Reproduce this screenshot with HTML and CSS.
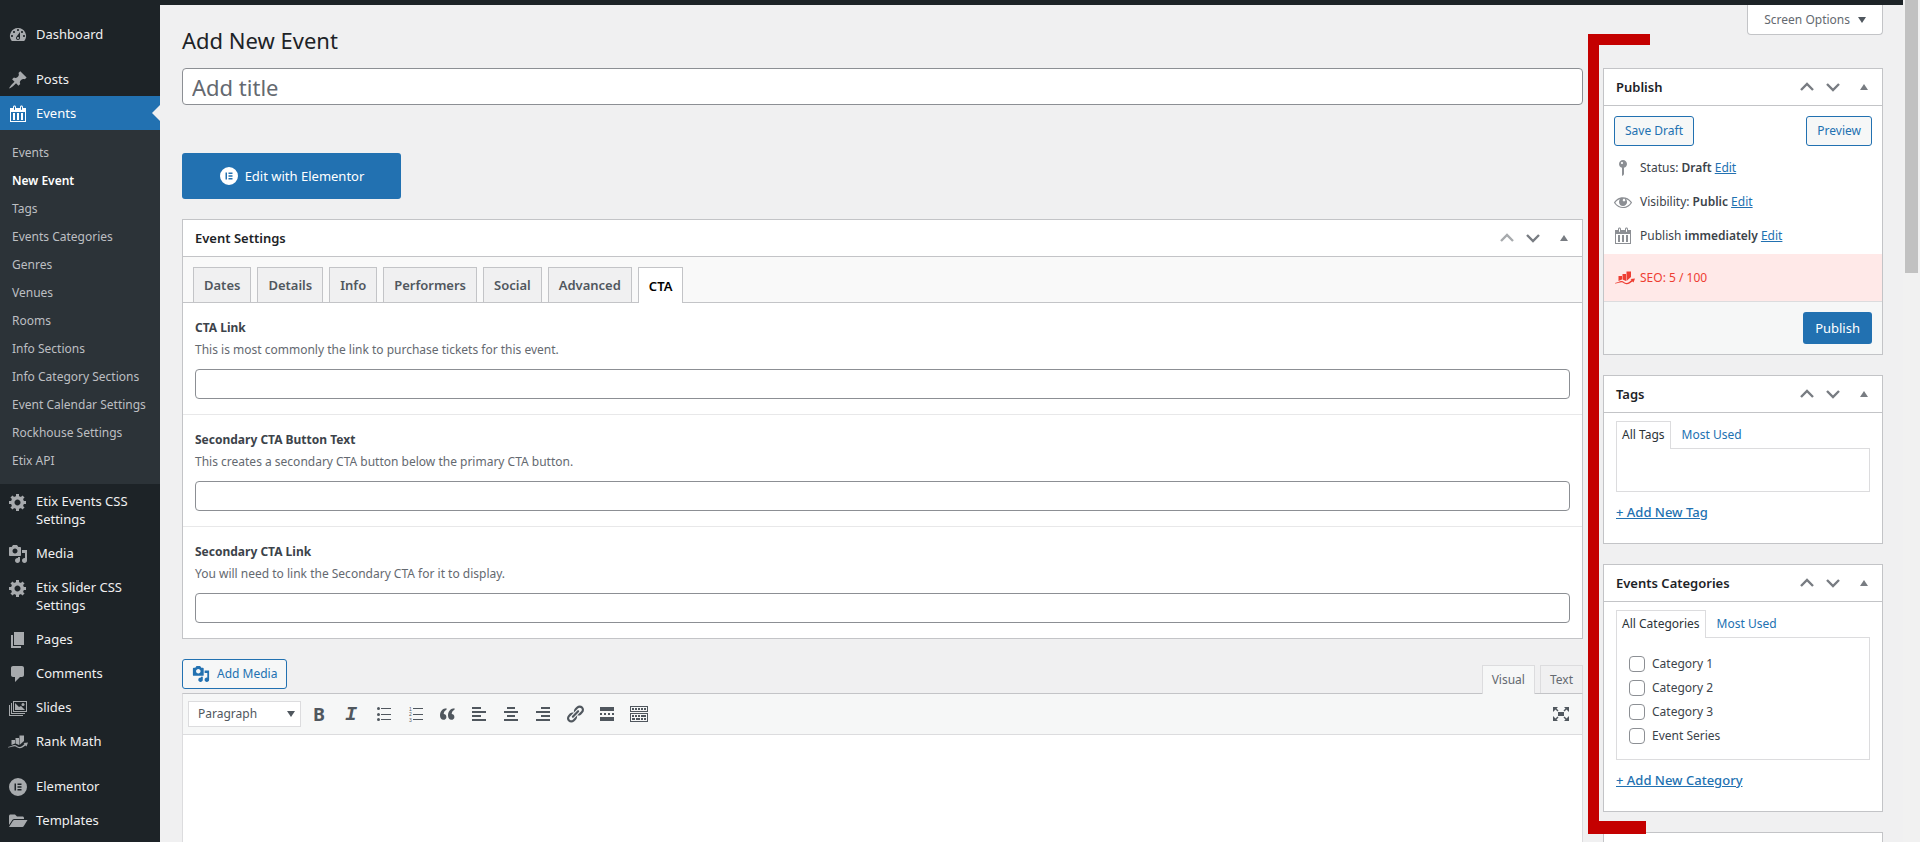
FILE: index.html
```html
<!DOCTYPE html>
<html lang="en">
<head>
  <meta charset="utf-8">
  <title>Add New Event</title>
  <link rel="stylesheet" href="styles.css">
</head>
<body>
  <!-- icon sprite -->
  <svg class="sprite">
    <symbol id="i-dashboard" viewBox="0 0 20 20"><path d="M3.76 16h12.48A7.998 7.998 0 0 0 10 3a7.998 7.998 0 0 0-6.24 13zM10 4c.55 0 1 .45 1 1s-.45 1-1 1-1-.45-1-1 .45-1 1-1zM6 6c.55 0 1 .45 1 1s-.45 1-1 1-1-.45-1-1 .45-1 1-1zm8 0c.55 0 1 .45 1 1s-.45 1-1 1-1-.45-1-1 .45-1 1-1zm-5.37 5.55L12 7v6c0 1.1-.9 2-2 2s-2-.9-2-2c0-.57.24-1.08.63-1.45zM4 10c.55 0 1 .45 1 1s-.45 1-1 1-1-.45-1-1 .45-1 1-1zm12 0c.55 0 1 .45 1 1s-.45 1-1 1-1-.45-1-1 .45-1 1-1zm-5 3c0-.55-.45-1-1-1s-1 .45-1 1 .45 1 1 1 1-.45 1-1z"/></symbol>
    <symbol id="i-post" viewBox="0 0 20 20"><path d="M10.44 3.02l1.82-1.82 6.36 6.35-1.83 1.82c-1.05-.68-2.48-.57-3.41.36l-.75.75c-.92.93-1.04 2.35-.35 3.41l-1.83 1.82-2.41-2.41-2.8 2.79c-.42.42-3.38 2.71-3.8 2.29s1.86-3.39 2.28-3.81l2.79-2.79L4.1 9.36l1.83-1.82c1.05.69 2.48.57 3.4-.36l.75-.75c.93-.92 1.05-2.35.36-3.41z"/></symbol>
    <symbol id="i-calendar" viewBox="0 0 20 20"><path d="M15 4h3v14H2V4h3V3c0-.83.67-1.5 1.5-1.5S8 2.17 8 3v1h4V3c0-.83.67-1.5 1.5-1.5S15 2.17 15 3v1zM6 3v2.5c0 .28.22.5.5.5s.5-.22.5-.5V3c0-.28-.22-.5-.5-.5S6 2.72 6 3zm7 0v2.5c0 .28.22.5.5.5s.5-.22.5-.5V3c0-.28-.22-.5-.5-.5s-.5.22-.5.5zm4 14V8H3v9h14zM7 16V9H5v7h2zm4 0V9H9v7h2zm4 0V9h-2v7h2z"/></symbol>
    <symbol id="i-gear" viewBox="0 0 20 20"><path d="M18 12h-2.18c-.17.7-.44 1.35-.81 1.93l1.54 1.54-2.1 2.1-1.54-1.54c-.58.36-1.23.63-1.91.79V19H8v-2.18c-.68-.16-1.33-.43-1.91-.79l-1.54 1.54-2.12-2.12 1.54-1.54c-.36-.58-.63-1.23-.79-1.91H1V9.03h2.17c.16-.7.44-1.35.8-1.94L2.43 5.55l2.1-2.1 1.54 1.54c.58-.37 1.24-.64 1.93-.81V2h3v2.18c.68.16 1.33.43 1.91.79l1.54-1.54 2.12 2.12-1.54 1.54c.36.59.64 1.24.8 1.94H18V12zm-8.5 1.5c1.66 0 3-1.34 3-3s-1.34-3-3-3-3 1.34-3 3 1.34 3 3 3z"/></symbol>
    <symbol id="i-media" viewBox="0 0 20 20"><path d="M13 11V4c0-.55-.45-1-1-1h-1.67L9 1H5L3.67 3H2c-.55 0-1 .45-1 1v7c0 .55.45 1 1 1h10c.55 0 1-.45 1-1zM7 4.5c1.38 0 2.5 1.12 2.5 2.5S8.38 9.5 7 9.5 4.5 8.38 4.5 7 5.62 4.5 7 4.5zM14 6h5v10.5c0 1.38-1.12 2.5-2.5 2.5S14 17.88 14 16.5s1.12-2.5 2.5-2.5c.17 0 .34.02.5.05V9h-3V6zm-4 8.05V13h2v3.5c0 1.38-1.12 2.5-2.5 2.5S7 17.88 7 16.5 8.12 14 9.5 14c.17 0 .34.02.5.05z"/></symbol>
    <symbol id="i-page" viewBox="0 0 20 20"><path d="M6 15V2h10v13H6zm-1 1h8v2H3V5h2v11z"/></symbol>
    <symbol id="i-comment" viewBox="0 0 20 20"><path d="M5 2h9c1.1 0 2 .9 2 2v7c0 1.1-.9 2-2 2h-2l-5 5v-5H5c-1.1 0-2-.9-2-2V4c0-1.1.9-2 2-2z"/></symbol>
    <symbol id="i-slides" viewBox="0 0 20 20"><path d="M5 3h14v11H5V3zm1 1v9h12V4H6zM3 5h1v10h13v1H3V5zM1 7h1v10h13v1H1V7zM7 5l4 4 2-1 4 4H7V5z"/><circle cx="15" cy="6.500" r="1.500"/></symbol>
    <symbol id="i-rank" viewBox="0 0 20 20"><path d="M3.500 8H7v3.500L3.500 13zM7.500 6H11v7L7.500 11.500zM11.500 3.500H16V9l-4.500 4zM0 15c2.500-.3 4.500-2 6.500-2 2.200 0 2.800 2 5 2 2 0 3.500-1.500 5-3l-1-1 4.500-.5-1.500 4-1-1c-1.500 1-3.500 2.700-6 2.700-2.400 0-3-1.900-5-1.900-1.800 0-3.500 1.200-6.500 1.200z"/></symbol>
    <symbol id="i-elementor" viewBox="0 0 20 20"><path fill-rule="evenodd" d="M10 1a9 9 0 1 0 0 18 9 9 0 0 0 0-18zM6.500 6.500H8v7H6.500v-7zm3 0h4V8h-4V6.500zm0 2.750h4v1.500h-4v-1.500zm0 2.750h4v1.500h-4V12z"/></symbol>
    <symbol id="i-folder" viewBox="0 0 20 20"><path d="M1 14V5c0-.8.700-1.500 1.500-1.500H7l2 2h5.500c.8 0 1.500.7 1.500 1.500v1H6.500c-1 0-2 .5-2.500 1.500L1 14zm0 2l4-6.300c.3-.5.8-.7 1.300-.7H19.500l-3.800 6.300c-.3.500-.8.700-1.300.700H1z"/></symbol>
    <symbol id="i-eye" viewBox="0 0 20 20"><path d="M18.300 9.500C15 4.900 8.500 3.800 3.900 7.200c-1.200.9-2.200 2.100-3 3.400.2.400.5.800.8 1.200 3.300 4.600 9.600 5.600 14.200 2.400.9-.7 1.700-1.400 2.400-2.400.3-.4.5-.8.8-1.200-.3-.4-.5-.8-.8-1.100zm-8.200-2.300c.5-.5 1.300-.5 1.800 0s.5 1.300 0 1.800-1.300.5-1.800 0-.5-1.300 0-1.800zm-.1 7.700c-3.100 0-6-1.600-7.700-4.200C3.500 9 5.100 7.800 7 7.200c-.7.800-1 1.700-1 2.700 0 2.200 1.700 4.100 4 4.100 2.200 0 4.100-1.700 4.100-4v-.1c0-1-.4-2-1.100-2.700 1.900.6 3.500 1.800 4.700 3.500-1.700 2.600-4.600 4.200-7.700 4.200z"/></symbol>
    <symbol id="i-pin" viewBox="0 0 20 20"><path d="M14 6c0 1.860-1.280 3.410-3 3.860V16c0 1-2 2-2 2V9.860c-1.720-.45-3-2-3-3.860 0-2.210 1.790-4 4-4s4 1.790 4 4zM8 5c0 .55.45 1 1 1s1-.45 1-1-.45-1-1-1-1 .45-1 1z"/></symbol>
    <symbol id="i-up" viewBox="0 0 20 20"><path d="M4 13l6-6 6 6" fill="none" stroke="currentColor" stroke-width="2.400"/></symbol>
    <symbol id="i-down" viewBox="0 0 20 20"><path d="M4 7l6 6 6-6" fill="none" stroke="currentColor" stroke-width="2.400"/></symbol>
    <symbol id="i-ul" viewBox="0 0 20 20"><path d="M8 4h10v1H8zM8 10h10v1H8zM8 15h10v1H8z"/><circle cx="5.500" cy="4.500" r="1.500"/><circle cx="5.500" cy="10.500" r="1.500"/><circle cx="5.500" cy="15.500" r="1.500"/></symbol>
    <symbol id="i-ol" viewBox="0 0 20 20"><path d="M8 4h10v1H8zM8 10h10v1H8zM8 15h10v1H8z"/><g class="ol-num"><text x="4" y="7">1</text><text x="4" y="12">2</text><text x="4" y="18">3</text></g></symbol>
    <symbol id="i-quote" viewBox="0 0 20 20"><path d="M9.500 4.200C6 4.200 3 7 3 11.500c0 2.500 1.300 4.300 3.400 4.300 1.700 0 3-1.200 3-2.900S8.200 10 6.700 10c.1-2 1.300-3.500 2.800-4.200zM17.500 4.200c-3.500 0-6.500 2.800-6.500 7.300 0 2.500 1.300 4.300 3.400 4.300 1.700 0 3-1.200 3-2.900s-1.200-2.900-2.700-2.900c.1-2 1.300-3.500 2.800-4.200z"/></symbol>
    <symbol id="i-left" viewBox="0 0 20 20"><path d="M3 3h9v2H3zM3 7h14v2H3zM3 11h9v2H3zM3 15h14v2H3z"/></symbol>
    <symbol id="i-center" viewBox="0 0 20 20"><path d="M6 3h8v2H6zM3 7h14v2H3zM6 11h8v2H6zM3 15h14v2H3z"/></symbol>
    <symbol id="i-right" viewBox="0 0 20 20"><path d="M8 3h9v2H8zM3 7h14v2H3zM8 11h9v2H8zM3 15h14v2H3z"/></symbol>
    <symbol id="i-link" viewBox="0 0 20 20"><path d="M17.740 2.760c1.680 1.690 1.680 4.410 0 6.100l-1.530 1.520c-1.120 1.120-2.700 1.470-4.140 1.090l2.620-2.610.76-.77.76-.76c.84-.84.84-2.200 0-3.040-.84-.85-2.200-.85-3.040 0l-.77.76-3.380 3.380c-.37-1.440-.02-3.020 1.100-4.140l1.520-1.530c1.690-1.680 4.420-1.680 6.100 0zM8.590 13.430l5.340-5.340c.42-.42.42-1.100 0-1.520-.44-.43-1.130-.39-1.530 0l-5.330 5.340c-.42.42-.42 1.100 0 1.520.44.43 1.130.39 1.520 0zm-.76 2.290l4.140-4.150c.38 1.440.03 3.020-1.090 4.140l-1.520 1.530c-1.690 1.680-4.410 1.680-6.100 0-1.680-1.680-1.680-4.420 0-6.100l1.530-1.520c1.120-1.120 2.700-1.470 4.140-1.100l-4.140 4.150c-.85.84-.85 2.200 0 3.050.84.84 2.200.84 3.040 0z"/></symbol>
    <symbol id="i-more" viewBox="0 0 20 20"><path d="M3 3h14v4H3zM3 9h2v2H3zM7 9h2v2H7zM11 9h2v2h-2zM15 9h2v2h-2zM3 13h14v4H3z"/></symbol>
    <symbol id="i-kitchen" viewBox="0 0 20 20"><path d="M19 2v6H1V2h18zm-1 5V3H2v4h16zM5 4v2H3V4h2zm3 0v2H6V4h2zm3 0v2H9V4h2zm3 0v2h-2V4h2zm3 0v2h-2V4h2zm2 5v9H1V9h18zm-1 8v-7H2v7h16zM5 11v2H3v-2h2zm3 0v2H6v-2h2zm3 0v2H9v-2h2zm6 0v2h-5v-2h5zm-11 3v2H3v-2h3zm5 0v2H7v-2h4zm3 0v2h-2v-2h2zm3 0v2h-2v-2h2z"/></symbol>
    <symbol id="i-full" viewBox="0 0 20 20"><path d="M7 8h6v4H7zM2 3h5L5.500 4.500l2 2-1 1-2-2L2 8zM18 3h-5l1.500 1.500-2 2 1 1 2-2L18 8zM2 17h5l-1.500-1.500 2-2-1-1-2 2L2 12zM18 17h-5l1.500-1.500-2-2 1-1 2 2L18 12z"/></symbol>
  </svg>

  <div class="topbar"></div>
  <nav class="menu">
    <a href="#" class="item"><svg><use href="#i-dashboard"/></svg>Dashboard</a>
    <div class="separator"></div>
    <a href="#" class="item"><svg><use href="#i-post"/></svg>Posts</a>
    <a href="#" class="item current"><svg><use href="#i-calendar"/></svg>Events</a>
    <div class="submenu">
      <a href="#">Events</a>
      <a href="#" class="active">New Event</a>
      <a href="#">Tags</a>
      <a href="#">Events Categories</a>
      <a href="#">Genres</a>
      <a href="#">Venues</a>
      <a href="#">Rooms</a>
      <a href="#">Info Sections</a>
      <a href="#">Info Category Sections</a>
      <a href="#">Event Calendar Settings</a>
      <a href="#">Rockhouse Settings</a>
      <a href="#">Etix API</a>
    </div>
    <a href="#" class="item"><svg><use href="#i-gear"/></svg>Etix Events CSS Settings</a>
    <a href="#" class="item"><svg><use href="#i-media"/></svg>Media</a>
    <a href="#" class="item"><svg><use href="#i-gear"/></svg>Etix Slider CSS Settings</a>
    <a href="#" class="item"><svg><use href="#i-page"/></svg>Pages</a>
    <a href="#" class="item"><svg><use href="#i-comment"/></svg>Comments</a>
    <a href="#" class="item"><svg><use href="#i-slides"/></svg>Slides</a>
    <a href="#" class="item"><svg><use href="#i-rank"/></svg>Rank Math</a>
    <div class="separator"></div>
    <a href="#" class="item"><svg><use href="#i-elementor"/></svg>Elementor</a>
    <a href="#" class="item"><svg><use href="#i-folder"/></svg>Templates</a>
  </nav>

  <main class="content">
    <header class="page-head">
      <h1>Add New Event</h1>
      <button class="screen-options">Screen Options <span class="tri down"></span></button>
    </header>

    <div class="columns">
      <div class="primary">
        <input class="title" type="text" placeholder="Add title" aria-label="Add title">
        <button class="elementor"><svg><use href="#i-elementor"/></svg>Edit with Elementor</button>

        <section class="box settings">
          <div class="box-head">
            <h2>Event Settings</h2>
            <button class="muted" aria-label="Move up"><svg><use href="#i-up"/></svg></button>
            <button aria-label="Move down"><svg><use href="#i-down"/></svg></button>
            <button aria-label="Toggle panel"><span class="tri up"></span></button>
          </div>
          <div class="tabs">
            <button>Dates</button>
            <button>Details</button>
            <button>Info</button>
            <button>Performers</button>
            <button>Social</button>
            <button>Advanced</button>
            <button class="active">CTA</button>
          </div>
          <div class="field">
            <label for="cta-link">CTA Link</label>
            <p>This is most commonly the link to purchase tickets for this event.</p>
            <input type="text" id="cta-link">
          </div>
          <div class="field">
            <label for="cta-text">Secondary CTA Button Text</label>
            <p>This creates a secondary CTA button below the primary CTA button.</p>
            <input type="text" id="cta-text">
          </div>
          <div class="field">
            <label for="cta-link-2">Secondary CTA Link</label>
            <p>You will need to link the Secondary CTA for it to display.</p>
            <input type="text" id="cta-link-2">
          </div>
        </section>

        <div class="editor-tools">
          <button class="button add-media"><svg><use href="#i-media"/></svg>Add Media</button>
          <div class="editor-tabs">
            <button class="active">Visual</button>
            <button>Text</button>
          </div>
        </div>
        <div class="editor">
          <div class="toolbar">
            <div class="format">
              <select aria-label="Format"><option>Paragraph</option></select>
              <span class="tri down"></span>
            </div>
            <button class="bold">B</button>
            <button class="italic">I</button>
            <button aria-label="Bulleted list"><svg><use href="#i-ul"/></svg></button>
            <button aria-label="Numbered list"><svg><use href="#i-ol"/></svg></button>
            <button aria-label="Blockquote"><svg><use href="#i-quote"/></svg></button>
            <button aria-label="Align left"><svg><use href="#i-left"/></svg></button>
            <button aria-label="Align center"><svg><use href="#i-center"/></svg></button>
            <button aria-label="Align right"><svg><use href="#i-right"/></svg></button>
            <button aria-label="Insert link"><svg><use href="#i-link"/></svg></button>
            <button aria-label="Read more"><svg><use href="#i-more"/></svg></button>
            <button aria-label="Toolbar toggle"><svg><use href="#i-kitchen"/></svg></button>
            <button class="fullscreen" aria-label="Fullscreen"><svg><use href="#i-full"/></svg></button>
          </div>
          <textarea aria-label="Content"></textarea>
        </div>
      </div>

      <aside class="side">
        <div class="marked">
          <div class="bracket"></div>
          <section class="box">
            <div class="box-head">
              <h2>Publish</h2>
              <button aria-label="Move up"><svg><use href="#i-up"/></svg></button>
              <button aria-label="Move down"><svg><use href="#i-down"/></svg></button>
              <button aria-label="Toggle panel"><span class="tri up"></span></button>
            </div>
            <div class="publish-actions">
              <button class="button">Save Draft</button>
              <button class="button">Preview</button>
            </div>
            <div class="misc"><svg><use href="#i-pin"/></svg><span>Status: <b>Draft</b> <a href="#">Edit</a></span></div>
            <div class="misc"><svg><use href="#i-eye"/></svg><span>Visibility: <b>Public</b> <a href="#">Edit</a></span></div>
            <div class="misc"><svg><use href="#i-calendar"/></svg><span>Publish <b>immediately</b> <a href="#">Edit</a></span></div>
            <div class="seo"><svg><use href="#i-rank"/></svg>SEO: 5 / 100</div>
            <div class="publish-foot"><button class="primary-button">Publish</button></div>
          </section>

          <section class="box">
            <div class="box-head">
              <h2>Tags</h2>
              <button aria-label="Move up"><svg><use href="#i-up"/></svg></button>
              <button aria-label="Move down"><svg><use href="#i-down"/></svg></button>
              <button aria-label="Toggle panel"><span class="tri up"></span></button>
            </div>
            <div class="terms">
              <div class="term-tabs"><a href="#" class="active">All Tags</a><a href="#">Most Used</a></div>
              <div class="term-panel"></div>
              <a href="#" class="add-term">+ Add New Tag</a>
            </div>
          </section>

          <section class="box">
            <div class="box-head">
              <h2>Events Categories</h2>
              <button aria-label="Move up"><svg><use href="#i-up"/></svg></button>
              <button aria-label="Move down"><svg><use href="#i-down"/></svg></button>
              <button aria-label="Toggle panel"><span class="tri up"></span></button>
            </div>
            <div class="terms">
              <div class="term-tabs"><a href="#" class="active">All Categories</a><a href="#">Most Used</a></div>
              <div class="term-panel list">
                <label><input type="checkbox">Category 1</label>
                <label><input type="checkbox">Category 2</label>
                <label><input type="checkbox">Category 3</label>
                <label><input type="checkbox">Event Series</label>
              </div>
              <a href="#" class="add-term">+ Add New Category</a>
            </div>
          </section>
        </div>
        <section class="box next"></section>
      </aside>
    </div>
  </main>
  <div class="scrollbar"><div class="thumb"></div></div>
</body>
</html>
```
FILE: styles.css
```css
* {
  box-sizing: border-box;
}

body {
  margin: 0;
  height: 100vh;
  overflow: hidden;
  display: grid;
  grid-template-columns: 160px minmax(0, 1fr) 17px;
  grid-template-rows: 5px minmax(0, 1fr);
  background: #f0f0f1;
  color: #3c434a;
  font: 12px/18px "Noto Sans", "Open Sans", sans-serif;
}

h1, h2, p {
  margin: 0;
}

a {
  color: #2271b1;
}

button, input, select, textarea {
  font: inherit;
  color: inherit;
  margin: 0;
}

button {
  background: none;
  border: none;
  padding: 0;
  cursor: pointer;
}

svg {
  width: 20px;
  height: 20px;
  fill: currentColor;
  flex: none;
}

.sprite {
  display: none;
}

.tri {
  display: inline-block;
  border: 4px solid transparent;
}

.tri.up {
  border-top: none;
  border-bottom: 6px solid #787c82;
}

.tri.down {
  border-bottom: none;
  border-top: 6px solid #50575e;
}

/* admin menu */

.topbar {
  grid-column: 1 / 3;
  background: #1d2327;
}

.menu {
  grid-column: 1;
  grid-row: 2;
  background: #1d2327;
  padding-top: 12px;
  overflow: hidden;
}

.item {
  position: relative;
  display: flex;
  gap: 8px;
  padding: 8px 20px 8px 8px;
  color: #f0f0f1;
  font-size: 13px;
  text-decoration: none;
}

.item svg {
  color: #a7aaad;
  margin-bottom: -2px;
}

.item.current {
  background: #2271b1;
  color: #fff;
}

.item.current svg {
  color: #fff;
}

.item.current::after {
  content: "";
  position: absolute;
  right: 0;
  top: 9px;
  border: 8px solid transparent;
  border-left: none;
  border-right-color: #f0f0f1;
}

.separator {
  height: 11px;
}

.submenu {
  background: #2c3338;
  padding: 9px 0;
}

.submenu a {
  display: block;
  padding: 5px 12px;
  color: #bdbfc2;
  text-decoration: none;
  white-space: nowrap;
}

.submenu .active {
  color: #fff;
  font-weight: 600;
}

/* page */

.content {
  grid-column: 2;
  grid-row: 2;
  padding: 0 20px 0 22px;
  overflow: hidden;
}

.page-head {
  display: flex;
  justify-content: space-between;
  align-items: flex-start;
  height: 63px;
}

h1 {
  padding-top: 20px;
  font-size: 22px;
  font-weight: 400;
  line-height: 30px;
  color: #1d2327;
}

.screen-options {
  display: flex;
  align-items: center;
  gap: 8px;
  height: 30px;
  padding: 0 16px;
  background: #fff;
  border: 1px solid #c3c4c7;
  border-top: none;
  border-radius: 0 0 4px 4px;
  color: #646970;
}

.columns {
  display: grid;
  grid-template-columns: minmax(0, 1fr) 280px;
  gap: 20px;
}

.title {
  display: block;
  width: 100%;
  height: 37px;
  padding: 0 9px;
  background: #fff;
  border: 1px solid #8c8f94;
  border-radius: 4px;
  font-size: 22px;
}

.title::placeholder {
  color: #646970;
}

.elementor {
  display: flex;
  align-items: center;
  justify-content: center;
  gap: 6px;
  width: 219px;
  height: 46px;
  margin: 48px 0 20px;
  background: #2271b1;
  border-radius: 3px;
  color: #fff;
  font-size: 13px;
}

.box {
  background: #fff;
  border: 1px solid #c3c4c7;
}

.box-head {
  display: flex;
  align-items: center;
  height: 37px;
  border-bottom: 1px solid #c3c4c7;
  color: #787c82;
}

.box-head h2 {
  flex: 1;
  padding-left: 12px;
  font-size: 13px;
  font-weight: 600;
  color: #1d2327;
}

.box-head button {
  display: flex;
  align-items: center;
  justify-content: center;
  width: 26px;
  height: 26px;
}

.box-head button:last-child {
  width: 36px;
}

.box-head .muted {
  color: #a7aaad;
}

.tabs {
  display: flex;
  gap: 6px;
  height: 46px;
  padding: 10px 10px 0;
  background: #f9f9f9;
  border-bottom: 1px solid #c3c4c7;
}

.tabs button {
  padding: 0 10px;
  background: #f0f0f1;
  border: 1px solid #c3c4c7;
  border-bottom: none;
  color: #50575e;
  font-size: 13px;
  font-weight: 600;
}

.tabs .active {
  margin-bottom: -1px;
  background: #fff;
  color: #000;
}

.field {
  padding: 16px 12px 15px;
  border-bottom: 1px solid #e8e8e9;
}

.field:last-child {
  border-bottom: none;
}

.field label {
  display: block;
  font-weight: 700;
}

.field p {
  padding: 4px 0 10px;
  color: #646970;
}

.field input {
  display: block;
  width: 100%;
  height: 30px;
  padding: 0 8px;
  background: #fff;
  border: 1px solid #8c8f94;
  border-radius: 4px;
}

.button {
  height: 30px;
  padding: 0 10px;
  background: #f6f7f7;
  border: 1px solid #2271b1;
  border-radius: 3px;
  color: #2271b1;
}

/* editor */

.editor-tools {
  display: flex;
  justify-content: space-between;
  height: 34px;
  margin-top: 20px;
}

.add-media {
  display: flex;
  align-items: center;
  gap: 7px;
  padding: 0 9px;
}

.add-media svg {
  width: 18px;
  height: 18px;
}

.editor-tabs {
  display: flex;
  gap: 5px;
  padding-top: 6px;
}

.editor-tabs button {
  padding: 0 9px;
  background: #f0f0f1;
  border: 1px solid #dcdcde;
  border-bottom: none;
  color: #646970;
}

.editor-tabs .active {
  z-index: 1;
  margin-bottom: -1px;
  background: #f6f7f7;
}

.editor {
  border: 1px solid #dcdcde;
  border-top-color: #c3c4c7;
}

.toolbar {
  display: flex;
  align-items: center;
  height: 41px;
  padding: 0 5px;
  background: #f6f7f7;
  border-bottom: 1px solid #dcdcde;
  color: #50575e;
}

.toolbar button {
  display: flex;
  align-items: center;
  justify-content: center;
  width: 32px;
  height: 30px;
}

.format {
  position: relative;
  width: 113px;
  margin-right: 2px;
}

.format select {
  display: block;
  appearance: none;
  width: 100%;
  height: 26px;
  padding: 0 9px;
  background: #fff;
  border: 1px solid #dcdcde;
  border-radius: 0;
}

.format .tri {
  position: absolute;
  right: 6px;
  top: 10px;
}

.toolbar .bold {
  font-size: 18px;
  font-weight: 700;
}

.toolbar .italic {
  font: italic bold 20px "Liberation Mono", monospace;
}

.ol-num {
  font: 5px "Liberation Sans", sans-serif;
}

.toolbar .fullscreen {
  margin-left: auto;
}

.editor textarea {
  display: block;
  width: 100%;
  height: 400px;
  background: #fff;
  border: none;
  resize: none;
}

/* side column */

.marked {
  position: relative;
}

.marked .box {
  margin-bottom: 20px;
}

/* red bracket laid over the gutter */
.bracket {
  position: absolute;
  left: -15px;
  top: -34px;
  bottom: -22px;
  width: 11px;
  background: #c40000;
}

.bracket::before,
.bracket::after {
  content: "";
  position: absolute;
  left: 0;
  background: #c40000;
}

.bracket::before {
  top: 0;
  width: 62px;
  height: 11px;
}

.bracket::after {
  bottom: 0;
  width: 58px;
  height: 13px;
}

.publish-actions {
  display: flex;
  justify-content: space-between;
  padding: 10px 10px 5px;
}

.misc {
  display: flex;
  align-items: center;
  gap: 7px;
  height: 34px;
  padding: 0 9px;
}

.misc svg {
  color: #8c8f94;
}

.misc b {
  font-weight: 600;
}

.seo {
  display: flex;
  align-items: center;
  gap: 5px;
  height: 48px;
  margin-top: 1px;
  padding: 0 11px;
  background: #ffe9e8;
  border-bottom: 1px solid #dcdcde;
  color: #ee3d32;
}

.publish-foot {
  display: flex;
  justify-content: flex-end;
  padding: 10px;
  background: #f6f7f7;
}

.primary-button {
  height: 32px;
  padding: 0 12px;
  background: #2271b1;
  border-radius: 3px;
  color: #fff;
  font-size: 13px;
}

.terms {
  padding: 8px 12px 22px;
}

.term-tabs {
  display: flex;
  height: 28px;
}

.term-tabs a {
  padding: 4px 5px;
  border: 1px solid transparent;
  border-bottom: none;
  text-decoration: none;
}

.term-tabs a + a {
  padding-left: 10px;
}

.term-tabs .active {
  z-index: 1;
  background: #fff;
  border-color: #dcdcde;
  color: #2c3338;
}

.term-panel {
  height: 44px;
  margin: -1px 0 11px;
  border: 1px solid #dcdcde;
}

.term-panel.list {
  display: flex;
  flex-direction: column;
  gap: 6px;
  height: auto;
  padding: 17px 12px 14px;
}

.term-panel label {
  display: flex;
  align-items: center;
  gap: 7px;
}

.term-panel input {
  appearance: none;
  width: 16px;
  height: 16px;
  background: #fff;
  border: 1px solid #8c8f94;
  border-radius: 4px;
}

.add-term {
  display: block;
  width: fit-content;
  font-size: 13px;
  font-weight: 500;
}

.next {
  height: 200px;
}

.scrollbar {
  grid-column: 3;
  grid-row: 1 / 3;
  padding: 0 2px;
  background: #f1f1f1;
}

.thumb {
  height: 273px;
  background: #c1c1c1;
}
```
